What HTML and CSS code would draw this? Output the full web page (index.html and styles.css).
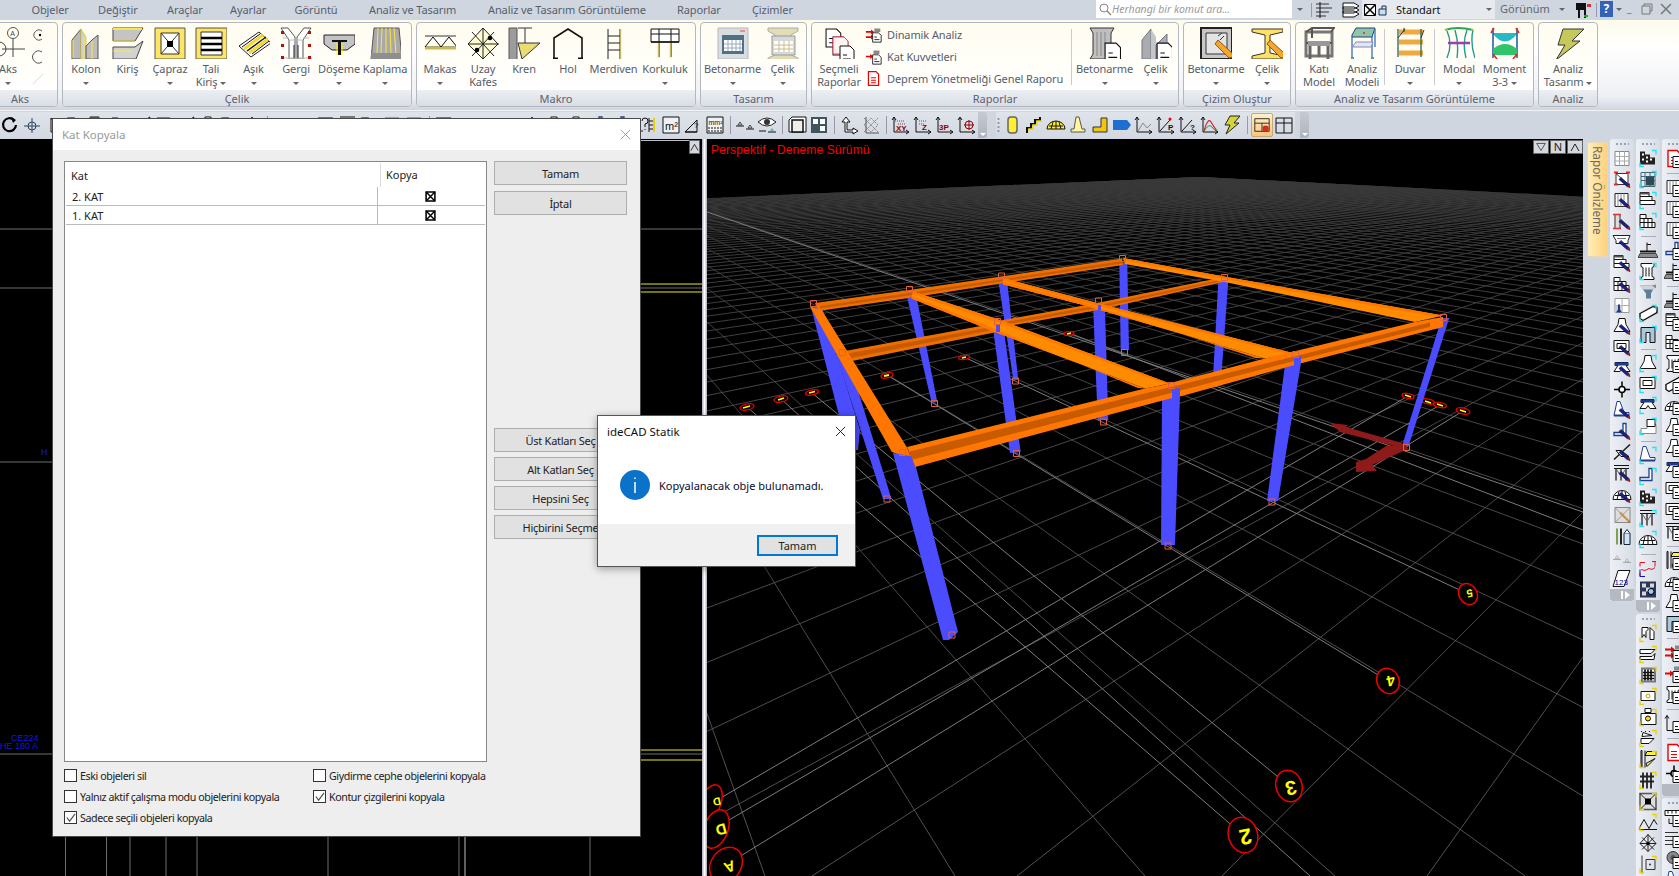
FILE: index.html
```html
<!DOCTYPE html>
<html lang="tr">
<head>
<meta charset="utf-8">
<title>ideCAD Statik</title>
<link rel="stylesheet" href="styles.css">
</head>
<body>
<svg class="defs" aria-hidden="true">
<defs>
<!-- ribbon icons, 32 box -->
<g id="r-kolon"><path d="M2 13 11 2v30H2z" fill="#b9b9b9" stroke="#555"/><path d="M11 2l5 8v22h-5z" fill="#cfcfcf" stroke="#e8d23a"/><path d="M16 19l6-6 6-5v24H16z" fill="#bdbdbd" stroke="#555"/><path d="M3 13v18M14 10v22M22 14v18" stroke="#ffe34d" fill="none"/></g>
<g id="r-kiris"><path d="M1 1h30l-8 13H1z" fill="#c4c4c4" stroke="#444"/><path d="M1 2h29" stroke="#ffe34d" stroke-width="2"/><path d="M1 20h22l8-6-7 18H1z" fill="#d2d2d2" stroke="#444"/><path d="M1 14h22M1 24h20" stroke="#ffe34d"/></g>
<g id="r-capraz"><path d="M1 1h30v31H1z" fill="#ffe566" stroke="#555"/><path d="M7 6h18v21H7z" fill="#fff" stroke="#333"/><path d="M7 6l18 21M25 6 7 27" stroke="#333"/><path d="M13 14h6v6h-6z" fill="#000"/></g>
<g id="r-tali"><path d="M1 1h31v31H1z" fill="#ffe566" stroke="#555"/><path d="M6 5h21v23H6z" fill="#fff" stroke="#333"/><path d="M6 11h21M6 17h21M6 23h21" stroke="#000" stroke-width="2.4"/></g>
<g id="r-asik"><path d="M1 19 21 5l12 11-20 14z" fill="#fff" stroke="#222"/><path d="M6 22 25 8M11 26l19-14" stroke="#f4d92c" stroke-width="3"/><path d="M9 24 28 10" stroke="#111" stroke-width="1.4"/><path d="M14 27 31 14M4 20 22 7" stroke="#111"/></g>
<g id="r-gergi"><path d="M1 1h7l7 9v22H9V13zM31 1h-7l-7 9v22h6V13z" fill="#fff" stroke="#555"/><path d="M3 11h6M23 11h6M1 31h31M10 13h12" stroke="#bbb"/><path d="M1 4h3v3H1zM28 4h3v3h-3zM1 17h3v3H1zM28 17h3v3h-3zM1 29h3v3H1zM28 29h3v3h-3z" fill="#a11"/><path d="M14 18v13M18 18v13" stroke="#222"/></g>
<g id="r-doseme"><path d="M1 8h31v9l-8 6H9l-8-6z" fill="#c4c4c4" stroke="#222"/><path d="M9 13h15v2h-6v13h-3V15H9z" fill="#111"/><path d="M14 16v12M19 16v12" stroke="#fff200"/></g>
<g id="r-kaplama"><path d="M5 1h25l3 31H2z" fill="#a9a9a9" stroke="#555"/><path d="M9 1 8 26M13 1l-1 25M17 1v25M21 1l1 25M25 1l2 25" stroke="#ffe34d" fill="none"/><path d="M2 26h31v6H2z" fill="#8f8f8f"/></g>
<g id="r-makas"><path d="M1 9h32M1 20h32" stroke="#333"/><path d="M1 21h32" stroke="#c5b955" stroke-width="3"/><path d="M1 20 9 10l8 10 8-10 8 10" fill="none" stroke="#111"/></g>
<g id="r-uzay"><path d="M16 1l15 16-15 15L1 17z" fill="#fffbd2" stroke="#222"/><path d="M1 17h31M16 1v31M5 5l22 24M27 5 5 29" stroke="#222"/><circle cx="23" cy="11" r="2.3" fill="#000"/><circle cx="10" cy="23" r="2.3" fill="#000"/></g>
<g id="r-kren"><path d="M1 1h8v32H1z" fill="#9c9c9c" stroke="#555"/><path d="M10 1h14M17 1v15M10 16h22L14 32z" fill="#e9dc74" stroke="#333"/></g>
<g id="r-hol"><path d="M2 31V11L16 2l14 9v20" fill="none" stroke="#111" stroke-width="1.6"/><path d="M1 32h5M26 32h5" stroke="#111" stroke-width="3"/></g>
<g id="r-merdiven"><path d="M10 2v30M22 2v30" stroke="#222"/><path d="M23 2v30" stroke="#ffe34d"/><path d="M10 9h12M10 16h12M10 23h12" stroke="#222"/></g>
<g id="r-korkuluk"><path d="M2 2h28v13H2z" fill="#fff" stroke="#111"/><path d="M2 7h28M10 2v28M22 2v28" stroke="#111"/><path d="M9 15v16M21 15v16" stroke="#ffe34d"/><path d="M2 15h28" stroke="#111" stroke-width="1.5"/></g>
<g id="r-tbeton"><path d="M1 1h30v31H1z" fill="#d9dde0" stroke="#b5b9bd"/><path d="M5 8h22v19H5z" fill="#4d7187"/><path d="M7 13h18v11H7z" fill="#fff"/><path d="M7 17h18M7 21h18M11 13v11M15 13v11M19 13v11M23 13v11" stroke="#9ab"/><path d="M23 4h5" stroke="#e44"/></g>
<g id="r-tcelik"><path d="M1 1h30v3l-7 4v20l7 3v2H1v-2l7-3V8L1 4z" fill="#e2dcb5" stroke="#aaa"/><path d="M5 9h23v19H5z" fill="#d8d8d8" stroke="#999"/><path d="M7 14h19v11H7z" fill="#fff"/><path d="M7 18h19M7 22h19M12 14v11M17 14v11M22 14v11" stroke="#cb8"/></g>
<g id="doc"><path d="M1 1h10l4 4v13H1z" fill="#fff" stroke="#111"/><path d="M4 10h4M4 14h8" stroke="#111"/></g>
<g id="r-secmeli"><use href="#doc" transform="translate(2 1) scale(1.05)"/><use href="#doc" transform="translate(9 9) scale(1.05)" stroke="#e33"/><path d="M10 10h11l4 4v13H10z" fill="#fff3f3" stroke="#f35"/><use href="#doc" transform="translate(16 18) scale(1)"/></g>
<g id="r-col-doc"><path d="M1 1h24l-3 5v21l3 5H1l3-5V6z" fill="#bfbfbf" stroke="#333"/><path d="M8 5v24M12 5v24M16 5v24" stroke="#888"/><use href="#doc" transform="translate(15 15) scale(1.1)"/></g>
<g id="r-kol-doc"><path d="M2 13 11 2v30H2z" fill="#a9adb3" stroke="#777"/><path d="M11 2l5 8v22h-5z" fill="#c3c7cc"/><path d="M16 18 27 7v25H16z" fill="#a9adb3" stroke="#777"/><use href="#doc" transform="translate(16 15) scale(1.1)"/></g>
<g id="r-cb"><path d="M1 1h31v31H1z" fill="#c8c8c8" stroke="#222" stroke-width="2"/><path d="M6 6h21v21H6z" fill="#e4e4e4" stroke="#333"/><path d="M24 9l-4 4M22 6l-4 3" stroke="#333"/><path d="M15 17l14 14 4-1-1-4-14-13z" fill="#f5a62b" stroke="#8a5a10"/></g>
<g id="r-cc"><path d="M1 2h31v3L19 8v18l14 3v3H1v-3l13-3V8L1 5z" fill="#ffe066" stroke="#333"/><path d="M16 17l14 14 4-1-1-4-14-13z" fill="#f5a62b" stroke="#8a5a10"/></g>
<g id="r-kati"><path d="M3 5h26v24H3z" fill="none" stroke="#777" stroke-width="3"/><path d="M3 5 9 1h22l-3 4M3 16h26M9 1v10" stroke="#555" fill="none" stroke-width="2"/><path d="M5 14h22v5H5z" fill="#999"/><path d="M7 19v13M25 19v13M16 19v11" stroke="#666" stroke-width="3"/></g>
<g id="r-am"><path d="M6 8 10 1h19l-3 9H6z" fill="#8fc5a8" stroke="#247"/><path d="M6 9v22M26 9v22M29 2v18" stroke="#3a6cc2" stroke-width="1.3"/><path d="M7 19l3-4h17l-2 5H7z" fill="#dfe7f7" stroke="#88a"/><circle cx="18" cy="6" r="1" fill="#e22"/><path d="M5 31h3M25 31h3" stroke="#5a5" stroke-width="2"/></g>
<g id="r-duvar"><path d="M5 5h24M5 15h24M5 26h24" stroke="#f0a93f" stroke-width="5"/><path d="M4 2v28M27 2v28M10 1v4" stroke="#3d6f52" stroke-width="1.4"/><path d="M4 11l7-9M27 11l3-8" stroke="#335" fill="none"/></g>
<g id="r-modal"><path d="M2 3q12-4 28 0" fill="none" stroke="#2ba35a" stroke-width="2"/><path d="M4 4q6 13 0 27M12 3q4 13 2 28M24 3q-5 13-1 28M30 3q-3 13 2 28" fill="none" stroke="#1d9c8a" stroke-width="1.4"/><path d="M5 16h22" stroke="#9a3fb0" stroke-width="2.4"/><path d="M2 3h3M28 3h3" stroke="#dd3"/></g>
<g id="r-moment"><path d="M4 1v30M28 1v30" stroke="#1d65a8" stroke-width="1.6"/><path d="M4 7h24M4 23h24" stroke="#0d2a5a"/><path d="M4 7q12 15 24 0z" fill="#27b9c2"/><path d="M4 22q12-10 24 0v6H4z" fill="#31c56b"/><path d="M2 6l3-5M30 6l-3-5M4 27l4 5M28 27l-4 5" stroke="#e22" stroke-width="1.6"/></g>
<g id="r-bolt"><path d="M11 2h21L20 14h8L4 33l9-15H6z" fill="#c7c85c" stroke="#333"/></g>
<g id="r-aks"><circle cx="16" cy="6" r="5.500" fill="none" stroke="#555"/><text x="13.200" y="9" class="akst">A</text><path d="M16 12v18M5 22h23" stroke="#444"/><circle cx="2" cy="22" r="7" fill="none" stroke="#444"/></g>
<!-- small toolbar shapes, 20 box -->
<g id="o-pen"><path d="M7 10l8 7 3 1-1-3-8-7z" fill="#1a1f8f" stroke="#111" stroke-width=".6"/><path d="M15 17l3 1-1-3z" fill="#c11"/></g>
<g id="o-cy"><path d="M14 2h4v4M2 14v4h4" fill="none" stroke="#1fe5ee" stroke-width="1.3"/></g>
<g id="o-ye"><path d="M14 2h4v4M2 14v4h4" fill="none" stroke="#e9d00c" stroke-width="1.3"/></g>
<g id="o-doc"><path d="M9 8h7l3 3v8H9z" fill="#fff" stroke="#111"/><path d="M11 13h3M11 16h6" stroke="#111"/></g>
<g id="t-grid"><path d="M3 3h14v14H3z" fill="#fff" stroke="#888"/><path d="M7.500 3v14M12.500 3v14M3 8h14M3 12.500h14" stroke="#aaa"/></g>
<g id="t-node"><path d="M4 4h12v11H4z" fill="#fff" stroke="#333"/><path d="M2 3h4M14 3h4M2 15h4M14 15h4" stroke="#e22" stroke-width="2"/><path d="M4 4l12 11" stroke="#333"/></g>
<g id="t-hatch"><path d="M3 3h13v13H3z" fill="#fff" stroke="#222"/><path d="M6 3v13M9 3v13M12 3v13" stroke="#888"/></g>
<g id="t-colr"><path d="M3 3h5v14H3z" fill="#ddd" stroke="#333"/><path d="M1 3h8M1 17h8" stroke="#d33" stroke-width="1.4"/></g>
<g id="t-ubeam"><path d="M1 3h17l-2 5v3H4V8z" fill="#fff" stroke="#222"/><path d="M5 6h9" stroke="#777"/></g>
<g id="t-stack"><path d="M2 2h9v4H2zM2 6h12v4H2zM2 10h15v4H2z" fill="#fff" stroke="#111"/><path d="M2 2h9v2H2z" fill="#555"/></g>
<g id="t-brick"><path d="M2 3h6v4H2zM2 7h12v4H2zM2 11h15v5H2z" fill="#fff" stroke="#111"/><path d="M6 7v9M10 7v9M14 11v5" stroke="#111"/></g>
<g id="t-winb"><path d="M3 3h14v14H3z" fill="#fff" stroke="#999"/><path d="M10 3v14M3 10h14" stroke="#aaa"/><path d="M3 10h7v7H3z" fill="#ccd"/><path d="M6 9h2v5l2 3H4l2-3z" fill="#1a3e8a"/></g>
<g id="t-found"><path d="M7 2h6l1 6 4 7H2l4-7z" fill="#fff" stroke="#111"/></g>
<g id="t-rect"><path d="M2 3h15v11H2z" fill="#fff" stroke="#111"/><path d="M5 6h9v5H5z" fill="none" stroke="#111"/></g>
<g id="t-found2"><path d="M3 4h13v3h-2l4 6h-6l-2-3-2 3H2l4-6H3z" fill="#fff" stroke="#111"/><path d="M3 4h13v3H3z" fill="#1d3c96"/></g>
<g id="t-plus"><path d="M10 2v16M2 10h16" stroke="#000" stroke-width="1.5"/><circle cx="10" cy="10" r="3" fill="#fff" stroke="#000" stroke-width="1.6"/></g>
<g id="t-tee"><path d="M5 1h3l4 11h5v3H2z" fill="#fff" stroke="#1b3f8f"/><path d="M2 15h15" stroke="#1b3f8f" stroke-width="2"/></g>
<g id="t-ell"><path d="M11 2h3v12H2v-3h9z" fill="#fff" stroke="#1b3f8f" stroke-width="1.3"/></g>
<g id="t-diag"><path d="M2 17 18 2" stroke="#111" stroke-width="1.4"/><path d="M4 8h5l8 6H9z" fill="#fff" stroke="#111"/></g>
<g id="t-truss"><path d="M2 2h15M2 5h15" stroke="#111"/><path d="M4 5v12M9 5v12M14 5v12" stroke="#111" stroke-width="1.2"/><path d="M4 5l5 8 5-8" fill="none" stroke="#666"/></g>
<g id="t-dome"><path d="M1 15a9 9 0 0 1 18 0z" fill="#fff" stroke="#111"/><path d="M5 15l2-8M10 15V6M15 15l-2-8M3 11h14" stroke="#111"/></g>
<g id="t-xgray"><path d="M3 2h15v15H3z" fill="#ddd" stroke="#888"/><path d="M3 2l15 15M18 2 3 17" stroke="#999"/><path d="M8 8l8 8 2 1-1-2-8-8z" fill="#f0a53a" stroke="#85520d" stroke-width=".5"/></g>
<g id="t-bars"><path d="M4 2h2v16H4z" fill="#7aa24f"/><path d="M8 2h2v16H8z" fill="#222"/><path d="M12 7h6v11h-6z" fill="#cfe6f7" stroke="#123"/><path d="M12 7l3-4 3 4" fill="#fff" stroke="#123"/></g>
<g id="t-lvl"><path d="M1 12h8M11 15h8" stroke="#aaa"/><path d="M3 11l2-3 2 3zM13 14l2-3 2 3z" fill="none" stroke="#bbb"/></g>
<g id="t-123"><path d="M6 2h12l-6 16H1z" fill="#fff" stroke="#111"/><text x="2.500" y="16" class="num">123</text></g>
<g id="t-check"><path d="M2 3h5v3h5v3h5v7H2z" fill="#222"/><path d="M4 5h2v2H4zM8 8h2v2H8zM4 10h2v2H4zM8 12h2v2H8zM12 10h2v2h-2z" fill="#fff"/></g>
<g id="t-calc"><path d="M3 3h14v14H3z" fill="none" stroke="#3d6a78"/><path d="M3 7h14M3 11h14M7 3v14M12 3v14" stroke="#3d6a78"/><path d="M8 7h8v9H8z" fill="#304a55"/></g>
<g id="t-beamf"><path d="M2 13h16l2 4H0z" fill="#8c8c8c" stroke="#444"/><path d="M2 11h16" stroke="#111" stroke-width="2"/><path d="M9 2v9M9 4h4" stroke="#111"/></g>
<g id="t-cap"><path d="M3 2h13v3l-2 1v9l2 1v2H3v-2l2-1V6L3 5z" fill="#fff" stroke="#111"/><path d="M8 6v9M11 6v9" stroke="#111"/></g>
<g id="t-funnel"><path d="M2 3h15l-4 8v5H8v-5z" fill="#5e7f98"/><path d="M2 3h15l-2 4H4z" fill="#cfd4da"/><path d="M14 3l4-1v4z" fill="#888"/></g>
<g id="t-slab"><path d="M2 10 15 3l4 1v5L5 17 2 15z" fill="#fff" stroke="#111" stroke-width="1.4"/></g>
<g id="t-port"><path d="M3 18V3h14v15h-5V8H8v10z" fill="#a9c8dc" stroke="#111"/></g>
<g id="t-lsm"><path d="M3 12h6v-2l2-2h7v9H3z" fill="#fff" stroke="#888"/><path d="M9 3h8v7H9z" fill="#fff" stroke="#111"/></g>
<g id="t-redline"><path d="M2 8V4h5M2 14v4h5M17 3v5M14 3h4M3 11l4 1 4-2 3 1 3-2" fill="none" stroke="#e11"/><path d="M2 11v7h5" fill="none" stroke="#11c"/></g>
<g id="t-lens"><path d="M2 2h16v16H2z" fill="#335" /><path d="M4 4h4v4H4zM12 4h4v4h-4zM8 8h4v4H8zM4 12h4v4H4z" fill="#cdd"/><circle cx="13" cy="12" r="3" fill="#9cf" stroke="#000"/></g>
<g id="t-m"><path d="M4 4h6v2l-2 2v6l-2-3-2 3zM12 4l4 4v8h-4z" fill="#fff" stroke="#111"/></g>
<g id="t-beamy"><path d="M2 5h15L13 9H2zM2 12h12l3-3-1 6H2z" fill="#fff" stroke="#111"/></g>
<g id="t-mesh"><path d="M3 2h15v15H3z" fill="#777"/><path d="M5 4h11v11H5z" fill="#fff"/><path d="M7 4v11M10 4v11M13 4v11M5 7h11M5 10h11M5 13h11" stroke="#111" stroke-width="1.7"/></g>
<g id="t-oct"><path d="M3 5h14v9H3z" fill="#fff" stroke="#111"/><path d="M8 9.500a2 2 0 1 0 4 0 2 2 0 1 0-4 0" fill="none" stroke="#b8a20a"/></g>
<g id="t-hook"><path d="M7 1h6v4H7zM3 6h15v11H3z" fill="#fff" stroke="#111"/><circle cx="10" cy="11" r="2.500" fill="#ffd90f" stroke="#111"/></g>
<g id="t-lay"><path d="M3 3h1M7 3h1M11 3h1M5 4l9 3-10 1zM3 10h13l-5 5H3z" fill="#fff" stroke="#111"/></g>
<g id="t-wedge"><path d="M3 1h1v17H3zM7 1v17M7 6h11v-4H9zM8 14l9-5-8 8z" fill="#fff23d" stroke="#111"/></g>
<g id="t-bar4"><path d="M5 2v16M9 2v16M13 2v16M2 6h14M2 11h14" stroke="#222" stroke-width="1.800"/></g>
<g id="t-xbox"><path d="M2 2h16v16H2z" fill="#ddd" stroke="#555" stroke-width="1.500"/><path d="M2 2l16 16M18 2 2 18" stroke="#222"/><path d="M7 7h6v6H7z" fill="#000"/></g>
<g id="t-waves"><path d="M1 16 6 7l5 9 5-9 3 5" fill="none" stroke="#111"/><path d="M1 17h18" stroke="#111"/></g>
<g id="t-star"><path d="M10 1l8 9-8 8-8-8z" fill="none" stroke="#222"/><path d="M2 10h16M10 1v17M4 4l12 12M16 4 4 16" stroke="#222"/><circle cx="10" cy="10" r="1.800"/></g>
<g id="t-frame"><path d="M4 1v18M8 5h9v10H8z" fill="none" stroke="#333"/><circle cx="12" cy="10" r="1" fill="#333"/></g>
<g id="t-rdoc"><path d="M4 2h9l3 3v13H4z" fill="#fff" stroke="#e00" stroke-width="1.400"/><path d="M7 9h6M7 12h6M7 15h6" stroke="#e00" stroke-width="1.200"/></g>
<g id="t-arr2"><path d="M1 7h8M1 13h8" stroke="#e00" stroke-width="2"/><path d="M7 4l4 3-4 3zM7 10l4 3-4 3z" fill="#e00"/><path d="M11 3h7v4h-7z" fill="#888"/></g>
<g id="t-arr1"><path d="M1 10h7" stroke="#e00" stroke-width="2"/><path d="M6 7l4 3-4 3z" fill="#e00"/><path d="M10 3h7v4h-7z" fill="#888"/></g>
<g id="t-rule"><path d="M1 3h17v5H1z" fill="#fff" stroke="#111"/><path d="M4 3v3M8 3v3M12 3v3M16 3v3M5 11v5h5" stroke="#111" fill="none"/></g>
<g id="t-lines"><path d="M1 4h13M1 8h16M1 12h13M1 16h10" stroke="#333"/></g>
<g id="t-ring"><circle cx="9" cy="8" r="6" fill="#888" stroke="#333"/><circle cx="9" cy="8" r="2.500" fill="#555"/></g>
<g id="t-axes"><path d="M3 2v15h15" fill="none" stroke="#111"/><path d="M3 2 1 5M3 2l2 3M18 17l-3-2M18 17l-3 2" stroke="#111"/></g>
<g id="t-sepline"><path d="M1 18h18" stroke="#111"/></g>
</defs>
</svg>

<div class="app">
  <header class="menubar">
    <nav class="menu">
      <span class="mi">Objeler</span><span class="mi">Değiştir</span><span class="mi">Araçlar</span><span class="mi">Ayarlar</span><span class="mi">Görüntü</span><span class="mi">Analiz ve Tasarım</span><span class="mi">Analiz ve Tasarım Görüntüleme</span><span class="mi">Raporlar</span><span class="mi">Çizimler</span>
    </nav>
    <div class="topright">
      <div class="search">
        <svg class="ico14" viewBox="0 0 14 14"><circle cx="6" cy="6" r="4" fill="none" stroke="#888"/><path d="M9 9l4 4" stroke="#888" stroke-width="1.400"/></svg>
        <span>Herhangi bir komut ara...</span>
      </div>
      <span class="drop wdrop"><i class="caret"></i></span>
      <span class="vsep"></span>
      <svg class="tico" viewBox="0 0 20 20"><use href="#t-lines"/><path d="M5 2v16" stroke="#111"/></svg>
      <svg class="tico gap6" viewBox="0 0 20 20"><path d="M2 3h11l5 3-5 3H2zM2 7h11l5 3-5 3H2zM2 11h11l5 3-5 3H2z" fill="#fff" stroke="#111"/></svg>
      <div class="std">
        <svg class="ico12" viewBox="0 0 12 12"><path d="M.5.500h11v11H.5z" fill="#fff" stroke="#000"/><path d="M1 1l10 10M11 1 1 11" stroke="#000" stroke-width="1.500"/></svg>
        <svg class="ico12" viewBox="0 0 12 12"><path d="M1 5h7v6H1z" fill="#cde" stroke="#135"/><path d="M4 5V2h4v3" fill="none" stroke="#135"/></svg>
        <span class="stdlabel">Standart</span>
        <i class="caret"></i>
      </div>
      <span class="gor">Görünüm</span><i class="caret"></i>
      <svg class="tico" viewBox="0 0 20 20"><path d="M3 3h10v7H3z" fill="#111"/><path d="M6 10v8M12 10v8" stroke="#111" stroke-width="2"/><path d="M14 4h4v3h-4z" fill="#c33"/><path d="M11 16h4" stroke="#2a2" stroke-width="2"/></svg>
      <span class="vsep"></span>
      <span class="help">?</span>
      <i class="caret"></i>
      <span class="wbtn">_</span>
      <svg class="ico12" viewBox="0 0 12 12"><path d="M1 3h8v8H1z" fill="none" stroke="#777"/><path d="M3 3V1h8v7H9" fill="none" stroke="#777"/></svg>
      <svg class="ico12" viewBox="0 0 12 12"><path d="M1 1l10 10M11 1 1 11" stroke="#777" stroke-width="1.500"/></svg>
    </div>
  </header>

  <section class="ribbon">
    <div class="grp g-aks">
      <div class="gbody">
        <div class="rb"><svg class="rico" viewBox="0 0 32 32"><use href="#r-aks"/></svg><span class="rl">Aks</span><i class="caret low"></i></div>
        <div class="aksside">
          <svg class="ico14" viewBox="0 0 14 14"><path d="M11 3a5 5 0 1 0 0 8" fill="none" stroke="#555"/><circle cx="9" cy="7" r="1.200"/></svg>
          <svg class="ico14" viewBox="0 0 14 14"><path d="M11 2a6 6 0 1 0 0 10" fill="none" stroke="#555"/></svg>
          <svg class="ico14" viewBox="0 0 14 14"><path d="M2 12l10-10" stroke="#ccc" stroke-dasharray="2 1"/></svg>
        </div>
      </div>
      <div class="gcap">Aks</div>
    </div>

    <div class="grp g-celik">
      <div class="gbody">
        <div class="rb"><svg class="rico" viewBox="0 0 32 32"><use href="#r-kolon"/></svg><span class="rl">Kolon</span><i class="caret low"></i></div>
        <div class="rb"><svg class="rico" viewBox="0 0 32 32"><use href="#r-kiris"/></svg><span class="rl">Kiriş</span></div>
        <div class="rb"><svg class="rico" viewBox="0 0 32 32"><use href="#r-capraz"/></svg><span class="rl">Çapraz</span><i class="caret low"></i></div>
        <div class="rb"><svg class="rico" viewBox="0 0 32 32"><use href="#r-tali"/></svg><span class="rl">Tali</span><span class="rl">Kiriş <i class="caret"></i></span></div>
        <div class="rb"><svg class="rico" viewBox="0 0 32 32"><use href="#r-asik"/></svg><span class="rl">Aşık</span><i class="caret low"></i></div>
        <div class="rb"><svg class="rico" viewBox="0 0 32 32"><use href="#r-gergi"/></svg><span class="rl">Gergi</span><i class="caret low"></i></div>
        <div class="rb"><svg class="rico" viewBox="0 0 32 32"><use href="#r-doseme"/></svg><span class="rl">Döşeme</span><i class="caret low"></i></div>
        <div class="rb"><svg class="rico" viewBox="0 0 32 32"><use href="#r-kaplama"/></svg><span class="rl">Kaplama</span><i class="caret low"></i></div>
      </div>
      <div class="gcap">Çelik</div>
    </div>

    <div class="grp g-makro">
      <div class="gbody">
        <div class="rb"><svg class="rico" viewBox="0 0 32 32"><use href="#r-makas"/></svg><span class="rl">Makas</span><i class="caret low"></i></div>
        <div class="rb"><svg class="rico" viewBox="0 0 32 32"><use href="#r-uzay"/></svg><span class="rl">Uzay</span><span class="rl">Kafes</span></div>
        <div class="rb"><svg class="rico" viewBox="0 0 32 32"><use href="#r-kren"/></svg><span class="rl">Kren</span></div>
        <div class="rb"><svg class="rico" viewBox="0 0 32 32"><use href="#r-hol"/></svg><span class="rl">Hol</span></div>
        <div class="rb"><svg class="rico" viewBox="0 0 32 32"><use href="#r-merdiven"/></svg><span class="rl">Merdiven</span></div>
        <div class="rb"><svg class="rico" viewBox="0 0 32 32"><use href="#r-korkuluk"/></svg><span class="rl">Korkuluk</span><i class="caret low"></i></div>
      </div>
      <div class="gcap">Makro</div>
    </div>

    <div class="grp g-tasarim">
      <div class="gbody">
        <div class="rb"><svg class="rico" viewBox="0 0 32 32"><use href="#r-tbeton"/></svg><span class="rl">Betonarme</span><i class="caret low"></i></div>
        <div class="rb"><svg class="rico" viewBox="0 0 32 32"><use href="#r-tcelik"/></svg><span class="rl">Çelik</span><i class="caret low"></i></div>
      </div>
      <div class="gcap">Tasarım</div>
    </div>

    <div class="grp g-rapor">
      <div class="gbody">
        <div class="rb"><svg class="rico" viewBox="0 0 32 32"><use href="#r-secmeli"/></svg><span class="rl">Seçmeli</span><span class="rl">Raporlar</span></div>
        <div class="rlist">
          <div class="rli"><svg class="ico16" viewBox="0 0 20 20"><use href="#t-arr2"/><use href="#o-doc"/></svg><span>Dinamik Analiz</span></div>
          <div class="rli"><svg class="ico16" viewBox="0 0 20 20"><use href="#t-arr1"/><use href="#o-doc"/></svg><span>Kat Kuvvetleri</span></div>
          <div class="rli"><svg class="ico16" viewBox="0 0 20 20"><use href="#t-rdoc"/></svg><span>Deprem Yönetmeliği Genel Raporu</span></div>
        </div>
        <span class="rsep"></span>
        <div class="rb"><svg class="rico" viewBox="0 0 32 32"><use href="#r-col-doc"/></svg><span class="rl">Betonarme</span><i class="caret low"></i></div>
        <div class="rb"><svg class="rico" viewBox="0 0 32 32"><use href="#r-kol-doc"/></svg><span class="rl">Çelik</span><i class="caret low"></i></div>
      </div>
      <div class="gcap">Raporlar</div>
    </div>

    <div class="grp g-cizim">
      <div class="gbody">
        <div class="rb"><svg class="rico" viewBox="0 0 32 32"><use href="#r-cb"/></svg><span class="rl">Betonarme</span><i class="caret low"></i></div>
        <div class="rb"><svg class="rico" viewBox="0 0 32 32"><use href="#r-cc"/></svg><span class="rl">Çelik</span><i class="caret low"></i></div>
      </div>
      <div class="gcap">Çizim Oluştur</div>
    </div>

    <div class="grp g-atg">
      <div class="gbody">
        <div class="rb"><svg class="rico" viewBox="0 0 32 32"><use href="#r-kati"/></svg><span class="rl">Katı</span><span class="rl">Model</span></div>
        <div class="rb"><svg class="rico" viewBox="0 0 32 32"><use href="#r-am"/></svg><span class="rl">Analiz</span><span class="rl">Modeli</span></div>
        <span class="rsep"></span>
        <div class="rb"><svg class="rico" viewBox="0 0 32 32"><use href="#r-duvar"/></svg><span class="rl">Duvar</span><i class="caret low"></i></div>
        <span class="rsep"></span>
        <div class="rb"><svg class="rico" viewBox="0 0 32 32"><use href="#r-modal"/></svg><span class="rl">Modal</span><i class="caret low"></i></div>
        <div class="rb"><svg class="rico" viewBox="0 0 32 32"><use href="#r-moment"/></svg><span class="rl">Moment</span><span class="rl">3-3 <i class="caret"></i></span></div>
      </div>
      <div class="gcap">Analiz ve Tasarım Görüntüleme</div>
    </div>

    <div class="grp g-analiz">
      <div class="gbody">
        <div class="rb"><svg class="rico" viewBox="0 0 32 32"><use href="#r-bolt"/></svg><span class="rl">Analiz</span><span class="rl">Tasarım <i class="caret"></i></span></div>
      </div>
      <div class="gcap">Analiz</div>
    </div>
  </section>

  <section class="toolrow">
    <div class="tb tb1">
      <svg class="cell" viewBox="0 0 20 20"><path d="M14 5a6.500 6.500 0 1 0 2 5" fill="none" stroke="#000" stroke-width="2.200"/><path d="M11 2l5 3-3 3z" fill="#000"/></svg>
      <svg class="cell" viewBox="0 0 20 20"><circle cx="10" cy="11" r="4" fill="none" stroke="#346"/><path d="M10 3v15M2 11h16" stroke="#346"/></svg>
      <svg class="cell" viewBox="0 0 20 20"><path d="M7 3v14h10z" fill="none" stroke="#111"/></svg>
      <svg class="cell" viewBox="0 0 20 20"><use href="#t-colr"/></svg>
      <svg class="cell" viewBox="0 0 20 20"><use href="#t-stack"/></svg>
      <svg class="cell" viewBox="0 0 20 20"><use href="#t-brick"/></svg>
      <svg class="cell" viewBox="0 0 20 20"><use href="#t-diag"/></svg>
      <svg class="cell" viewBox="0 0 20 20"><use href="#t-hatch"/></svg>
      <svg class="cell" viewBox="0 0 20 20"><use href="#t-diag"/></svg>
      <svg class="cell" viewBox="0 0 20 20"><use href="#t-found"/></svg>
      <svg class="cell" viewBox="0 0 20 20"><use href="#t-colr"/></svg>
      <svg class="cell" viewBox="0 0 20 20"><use href="#t-plus"/></svg>
      <span class="tsep"></span>
      <svg class="cell" viewBox="0 0 20 20"><use href="#t-lines"/></svg>
      <svg class="cell" viewBox="0 0 20 20"><use href="#t-lines"/></svg>
      <svg class="cell" viewBox="0 0 20 20"><use href="#t-rect"/></svg>
      <svg class="cell" viewBox="0 0 20 20"><use href="#t-truss"/></svg>
      <svg class="cell" viewBox="0 0 20 20"><use href="#t-colr"/></svg>
      <svg class="cell" viewBox="0 0 20 20"><use href="#t-calc"/></svg>
      <svg class="cell" viewBox="0 0 20 20"><use href="#t-calc"/></svg>
      <span class="tsep"></span>
      <svg class="cell" viewBox="0 0 20 20"><use href="#t-rect"/></svg>
      <svg class="cell" viewBox="0 0 20 20"><use href="#t-lvl"/></svg>
      <svg class="cell" viewBox="0 0 20 20"><use href="#t-lvl"/></svg>
      <svg class="cell" viewBox="0 0 20 20"><use href="#t-dome"/></svg>
      <svg class="cell" viewBox="0 0 20 20"><use href="#t-plus"/></svg>
      <svg class="cell" viewBox="0 0 20 20"><use href="#t-found"/></svg>
      <svg class="cell" viewBox="0 0 20 20"><use href="#t-found"/></svg>
      <svg class="cell" viewBox="0 0 20 20"><use href="#t-ell"/></svg>
      <svg class="cell" viewBox="0 0 20 20"><use href="#t-ell"/></svg>
      <span class="tgap"></span>
      <svg class="cell" viewBox="0 0 20 20"><path d="M1 16h3M3 6a3 3 0 1 1 3 3v3M6 14v1" fill="none" stroke="#111"/><path d="M10 3v14M15 3v14M10 6h5M10 10h5M10 14h5" stroke="#111"/><path d="M15 3v14" stroke="#e8d20c" stroke-width="2"/></svg>
      <svg class="cell" viewBox="0 0 20 20"><path d="M2 2h16v16H2z" fill="#eef1f5" stroke="#111"/><text x="4" y="15" class="mm">m²</text></svg>
      <svg class="cell" viewBox="0 0 20 20"><path d="M2 17 14 5v12zM2 17h12" fill="none" stroke="#111"/><text x="11" y="13" class="qm">?</text></svg>
      <svg class="cell" viewBox="0 0 20 20"><path d="M2 2h16v16H2z" fill="#eef1f5" stroke="#111"/><text x="3.500" y="10" class="mm2">mm²</text><path d="M3 13h14M3 16h14" stroke="#111" stroke-dasharray="2 1"/></svg>
      <span class="tsep"></span>
      <svg class="cell" viewBox="0 0 20 20"><path d="M1 11h8M11 14h8" stroke="#111"/><path d="M3 10l2-3 2 3zM13 13l2-3 2 3z" fill="none" stroke="#444"/></svg>
      <svg class="cell" viewBox="0 0 20 20"><path d="M1 7q9-8 18 0-9 8-18 0z" fill="#fff" stroke="#222"/><circle cx="10" cy="7" r="3" fill="#333"/><path d="M2 16h7M11 17h8" stroke="#111"/><path d="M13 16l2-3 2 3z" fill="#6ab"/></svg>
      <span class="tsep"></span>
      <svg class="cell" viewBox="0 0 20 20"><path d="M2 5l3-3h14v15H2z" fill="#fff" stroke="#111"/><path d="M5 5h11v12H5z" fill="#eee" stroke="#111" stroke-width="1.500"/></svg>
      <svg class="cell" viewBox="0 0 20 20"><path d="M2 2h16v16H2z" fill="#3f5560"/><path d="M4 4h5v5H4zM11 4h5v5h-5zM11 11h5v5h-5z" fill="#fff"/></svg>
      <span class="tsep"></span>
      <svg class="cell" viewBox="0 0 20 20"><path d="M6 17V7H3l4-5 4 5H8v8h6v-2l5 3-5 3v-2z" fill="#fff" stroke="#111"/></svg>
      <svg class="cell" viewBox="0 0 20 20"><path d="M3 3l14 14M17 3 3 17M3 10l7-7 7 7-7 7z" fill="none" stroke="#888" stroke-dasharray="2 1"/><path d="M5 2v16h13" fill="none" stroke="#555"/></svg>
      <span class="tsep"></span>
      <svg class="cell" viewBox="0 0 20 20"><use href="#t-axes"/><path d="M4 6h10M7 9h7" stroke="#555" stroke-dasharray="1 1"/><text x="5" y="16" class="axt">XY</text></svg>
      <svg class="cell" viewBox="0 0 20 20"><use href="#t-axes"/><path d="M6 6h7M6 9h5" stroke="#555" stroke-dasharray="1 1"/><text x="9" y="15" class="axt">Z</text></svg>
      <svg class="cell" viewBox="0 0 20 20"><use href="#t-axes"/><text x="4" y="15" class="axt">3P</text></svg>
      <svg class="cell" viewBox="0 0 20 20"><use href="#t-axes"/><circle cx="12" cy="10" r="4" fill="none" stroke="#900"/><path d="M12 5v10M7 10h10" stroke="#900"/></svg>
    </div>
    <span class="grip"><i class="caret"></i></span>
    <div class="tb tb2">
      <span class="dotsv"></span>
      <svg class="cell" viewBox="0 0 20 20"><rect x="6" y="2" width="9" height="16" rx="3" fill="#ffef2e" stroke="#666" stroke-width="1.500"/></svg>
      <svg class="cell" viewBox="0 0 20 20"><path d="M3 18v-5h4V9h4V5h5V2" fill="none" stroke="#111" stroke-width="2"/><path d="M5 16v-2h4v-4h4V6h5" fill="none" stroke="#f3d40f" stroke-width="1.500"/></svg>
      <svg class="cell" viewBox="0 0 20 20"><path d="M1 14a9 8 0 0 1 18 0z" fill="#ffef2e" stroke="#111"/><path d="M5 14l2-7M10 14V6M15 14l-2-7M3 11h14" stroke="#111"/></svg>
      <svg class="cell" viewBox="0 0 20 20"><path d="M8 2h3l3 12h3v3H3v-3h3z" fill="#fff7a0" stroke="#555"/></svg>
      <svg class="cell" viewBox="0 0 20 20"><path d="M11 3h6v14H3v-5h8z" fill="#f2c511" stroke="#333"/></svg>
      <svg class="cell" viewBox="0 0 20 20"><path d="M1 5h14l4 5-4 5H1z" fill="#1d6fd0"/></svg>
      <svg class="cell" viewBox="0 0 20 20"><use href="#t-axes"/><path d="M4 16 9 8l4 5 4-4" fill="none" stroke="#888"/></svg>
      <svg class="cell" viewBox="0 0 20 20"><use href="#t-axes"/><path d="M4 16 14 5" stroke="#111"/><circle cx="14" cy="4" r="1.500" fill="#e00"/><text x="12" y="15" class="axt2">P</text></svg>
      <svg class="cell" viewBox="0 0 20 20"><use href="#t-axes"/><path d="M4 16 14 5" stroke="#111"/><text x="12" y="15" class="axt2">?</text></svg>
      <svg class="cell" viewBox="0 0 20 20"><use href="#t-axes"/><path d="M4 16q4-14 7-9t6 9" fill="none" stroke="#c22" stroke-width="1.200"/><path d="M4 16q5-8 8-4t5 4" fill="none" stroke="#2a8a4a"/></svg>
      <svg class="cell" viewBox="0 0 20 20"><path d="M8 1h10l-6 7h5L4 19l4-9H3z" fill="#d5d43a" stroke="#222"/></svg>
      <span class="tsep"></span>
      <span class="cell hl"><svg class="ico18" viewBox="0 0 20 20"><path d="M2 3h16v14H2zM2 8h16M10 8v9" fill="none" stroke="#222"/><circle cx="14" cy="14" r="3.500" fill="#d62b1f"/></svg></span>
      <svg class="cell" viewBox="0 0 20 20"><path d="M2 3h16v15H2zM2 8h16M10 3v15" fill="none" stroke="#111"/></svg>
    </div>
    <span class="grip g2"><i class="caret"></i></span>
  </section>

  <main class="work">
    <div class="leftview">
      <svg class="canvas" viewBox="0 139 702 737">
        <path class="wl" d="M0 229h702M0 288h702M0 462h702M0 754h702"/>
        <path class="yl" d="M640 284h62M640 292h62M640 750h62M640 760h62"/>
        <path class="wl" d="M65.500 836v40M106.500 836v40M130 836v40M166 836v40M197 836v40M328 836v40M459 836v40M590 836v40"/>
        <path class="wb" d="M465 836v40M640 140.500h50"/>
        <text x="11" y="741" class="cadtxt">CE224</text>
        <text x="0" y="749" class="cadtxt">HE 180 A</text>
        <text x="41" y="455" class="cadtxt">H</text>
      </svg>
      <span class="updown"><svg viewBox="0 0 10 10" class="ico10"><path d="M1 9 5 2l4 7" fill="none" stroke="#222"/></svg></span>
    </div>
    <div class="divider"></div>
    <div class="view3d">
      <svg class="canvas" viewBox="707 139 876 737">
        <defs>
          <clipPath id="floorclip"><polygon points="1200,177 700,198.500 700,876 1590,876 1590,197"/></clipPath>
          <linearGradient id="floorgrad" gradientUnits="userSpaceOnUse" x1="0" y1="177" x2="0" y2="876">
            <stop offset="0" stop-color="#383838"/><stop offset=".3" stop-color="#4c4c4c"/><stop offset="1" stop-color="#5c5c5c"/>
          </linearGradient>
        </defs>
        <g id="floor" clip-path="url(#floorclip)"></g>
        <!-- main axes -->
        <path class="axis" d="M747 407 1243 835M781 399 1310 876M812 393 1289 786M887 375 1388 681M964 357 1468 594M1069 333 1583 530M1463 411 726 865M1440 405 717 827M1408 396 712 803M707 212 1583 512"/>
        <!-- far bubbles -->
        <g class="bub-s">
          <ellipse cx="747" cy="407" rx="7" ry="3" transform="rotate(-12 747 407)"/><ellipse cx="781" cy="399" rx="7" ry="3" transform="rotate(-12 781 399)"/><ellipse cx="812" cy="392.500" rx="6.500" ry="2.500" transform="rotate(-10 812 392.500)"/><ellipse cx="887" cy="375.500" rx="6" ry="2.500" transform="rotate(-10 887 375.500)"/><ellipse cx="964" cy="357.500" rx="5.500" ry="2" transform="rotate(-8 964 357.500)"/><ellipse cx="1069" cy="333.500" rx="5" ry="1.800" transform="rotate(-5 1069 333.500)"/>
          <ellipse cx="1408" cy="396" rx="6" ry="2.500" transform="rotate(10 1408 396)"/><ellipse cx="1428" cy="401.500" rx="6" ry="2.500" transform="rotate(10 1428 401.500)"/><ellipse cx="1440" cy="405" rx="6.500" ry="2.500" transform="rotate(10 1440 405)"/><ellipse cx="1463" cy="411" rx="7" ry="3" transform="rotate(12 1463 411)"/>
        </g>
        <path class="bub-y" d="M743 408l7-2M778 400l6-2M809 393l6-1.500M884 376l5-1M962 358l4-1M1067 334l4-1M1405 395l6 2M1425 401l6 2M1437 404l6 2M1460 410l6 2"/>
        <!-- columns -->
        <g class="cols">
          <polygon points="811,307 822,307 860,430 858,450 848,450"/>
          <polygon points="836,354 848,358 891.500,499 883,499"/>
          <polygon points="907.300,298 916.700,298 937.300,402 931.700,403"/>
          <polygon points="998.700,283 1007.300,283 1018.300,380 1013.300,380"/>
          <polygon points="1119.300,263 1127.300,263 1129,350 1120.700,350"/>
          <polygon points="1218.300,281 1228.300,281 1221.700,372 1213.300,372"/>
          <polygon points="1441.700,318 1449.300,318 1408.300,447 1401.700,447"/>
          <polygon points="1285,365 1301,363 1278,501 1267,501"/>
          <polygon points="1162,398 1180,396 1175,545 1161,545"/>
          <polygon points="1093.300,310 1105,310 1108.300,420 1097.700,420"/>
          <polygon points="993.300,331 1004,331 1020.700,452 1010,453"/>
          <polygon points="893,453 915,463 958,632 949,640 943,640"/>
        </g>
        <!-- ucs arrows -->
        <polygon class="ucs" points="1406,449 1340,432 1330,423 1348,425 1346,427 1402,443"/>
        <polygon class="ucs" points="1406,445 1386,446 1366,459 1356,462 1356,472 1377,471 1372,465 1408,449"/>
        <!-- beams -->
        <polygon class="bm-e" points="845,351 997,323 1003,320 1097,303 1224,277 1223,282 1098,310 1003,327 997,332 852,361"/>
        <polygon class="bm-d" points="848,353.500 997,326 1003,322.500 1097,305.500 1222,279.500 1222,281 1098,308 1003,325 997,329 851,358"/>
        <polygon class="bm-e" points="815,303 909,290 1001,276.500 1122,258.500 1123,265 1001,283.500 909,298 818,311"/>
        <polygon class="bm-d" points="820,306 909,293 1001,279.500 1122,261 1122,263.500 1001,281.500 909,295.500 820,308.500"/>
        <polygon class="bm-b" points="913,291.500 1000,320 1170,383.500 1145,388.500 995,332 911.500,298.500"/>
        <polygon class="bm" points="913,291.500 1000,320 1170,383.500 1166,384 1000,323 912,294"/>
        <polygon class="bm" points="911.500,298.500 995,332 1145,388.500 1138,388 995,329 911.500,296"/>
        <polygon class="bm-b" points="1003,278 1097,303 1293,353 1265,358.500 1083,305 1003,284.500"/>
        <polygon class="bm" points="1003,278 1097,303 1293,353 1288,354 1097,305.500 1003,280.500"/>
        <polygon class="bm" points="1003,284.500 1083,305 1265,358.500 1256,358 1083,302.500 1003,282"/>
        <polygon class="bm-b" points="1123,258 1224,276.500 1443,315.500 1415,322 1225,282 1125,264"/>
        <polygon class="bm" points="1123,258 1224,276.500 1443,315.500 1436,317 1224,279 1124,260.500"/>
        <polygon class="bm" points="907,447 1147,388 1163,385 1267,358 1415,322 1443,317 1443,327 1300,363.500 1180,396.500 1170,398.500 915,467"/>
        <polygon class="bm-d" points="910,451.500 1170,387.200 1300,355 1430,322.600 1430,326.800 1300,359.500 1170,393.200 910,460.300"/>
        <polygon class="bm" points="810,306.700 821.700,310 906.700,447 912,460 891.700,451.700"/>
        <g class="cols">
          <polygon points="1172,389 1180,388 1180,397 1172,399"/>
          <polygon points="1294,358 1301,356 1301,364 1294,366"/>
          <polygon points="893,453 911,456 915,466 900,470"/>
          <polygon points="996,325 1000,324 1000,332 996,332"/>
          <polygon points="1098,305 1101,305 1101,310 1098,310"/>
        </g>
        <!-- node markers -->
        <path class="nodes" d="M810.500 300.500h6v6h-6zM906.500 286.500h6v6h-6zM998.500 273h6v6h-6zM1119.500 255.500h6v6h-6zM1221.500 274.500h6v6h-6zM1440.500 314.500h6v6h-6zM1292.500 351.500h6v6h-6zM1168.500 382.500h6v6h-6zM899.500 449.500h6v6h-6zM839.500 349.500h6v6h-6zM994.500 318.500h6v6h-6zM1095.500 298h6v6h-6zM884 496h6v6h-6zM931.500 400.500h6v6h-6zM1012.500 378h6v6h-6zM1121.500 349.500h6v6h-6zM1403.500 444.500h6v6h-6zM1269 499h6v6h-6zM1165 543h6v6h-6zM949 632h6v6h-6zM1100.500 419h6v6h-6zM1013.500 450.500h6v6h-6z"/>
        <!-- near bubbles -->
        <g class="bub">
          <ellipse cx="1243" cy="835" rx="14.500" ry="18" transform="rotate(-18 1243 835)"/>
          <ellipse cx="1289" cy="786" rx="13" ry="16" transform="rotate(-18 1289 786)"/>
          <ellipse cx="1388" cy="681" rx="11" ry="13" transform="rotate(-25 1388 681)"/>
          <ellipse cx="1468" cy="594" rx="9" ry="11" transform="rotate(-30 1468 594)"/>
          <ellipse cx="711" cy="802" rx="10" ry="18" transform="rotate(20 711 802)"/>
          <ellipse cx="716" cy="829" rx="12" ry="20" transform="rotate(20 716 829)"/>
          <ellipse cx="726" cy="865" rx="15" ry="19" transform="rotate(35 726 865)"/>
        </g>
        <text class="btx b20" transform="translate(1250 828) rotate(168)">2</text>
        <text class="btx b18" transform="translate(1295 780) rotate(168)">3</text>
        <text class="btx b15" transform="translate(1394 675) rotate(170)">4</text>
        <text class="btx b12" transform="translate(1472 589) rotate(170)">5</text>
        <text class="btx b12" transform="translate(720 797) rotate(168)">D</text>
        <text class="btx b15" transform="translate(725 823) rotate(165)">D</text>
        <text class="btx b15" transform="translate(733 860) rotate(160)">A</text>
      </svg>
      <div class="ptitle">Perspektif - Deneme Sürümü</div>
      <div class="vbtns">
        <span class="vb"><svg viewBox="0 0 14 12" class="ico10"><path d="M1 1h12M1 1l6 10 6-10" fill="none" stroke="#222"/></svg></span>
        <span class="vb nb">N</span>
        <span class="vb"><svg viewBox="0 0 10 10" class="ico10"><path d="M1 9 5 2l4 7" fill="none" stroke="#222"/></svg></span>
      </div>
    </div>
    <aside class="side">
      <div class="rapor"><span>Rapor Önizleme</span></div>
      <div class="vtb">
        <span class="dots"></span>
        <svg class="ti" viewBox="0 0 20 20"><use href="#t-grid"/></svg>
        <svg class="ti" viewBox="0 0 20 20"><use href="#t-node"/><use href="#o-pen"/></svg>
        <svg class="ti" viewBox="0 0 20 20"><use href="#t-hatch"/><use href="#o-pen"/></svg>
        <svg class="ti" viewBox="0 0 20 20"><use href="#t-colr"/><use href="#o-pen"/></svg>
        <svg class="ti" viewBox="0 0 20 20"><use href="#t-ubeam"/><use href="#o-pen"/></svg>
        <svg class="ti" viewBox="0 0 20 20"><use href="#t-stack"/><use href="#o-pen"/></svg>
        <svg class="ti" viewBox="0 0 20 20"><use href="#t-brick"/><use href="#o-pen"/></svg>
        <svg class="ti" viewBox="0 0 20 20"><use href="#t-winb"/></svg>
        <svg class="ti" viewBox="0 0 20 20"><use href="#t-found"/><use href="#o-pen"/></svg>
        <svg class="ti" viewBox="0 0 20 20"><use href="#t-rect"/><use href="#o-pen"/></svg>
        <svg class="ti" viewBox="0 0 20 20"><use href="#t-found2"/><use href="#o-pen"/></svg>
        <svg class="ti" viewBox="0 0 20 20"><use href="#t-plus"/></svg>
        <svg class="ti" viewBox="0 0 20 20"><use href="#t-tee"/><use href="#o-pen"/></svg>
        <svg class="ti" viewBox="0 0 20 20"><use href="#t-ell"/><use href="#o-pen"/></svg>
        <svg class="ti" viewBox="0 0 20 20"><use href="#t-diag"/><use href="#o-pen"/></svg>
        <svg class="ti" viewBox="0 0 20 20"><use href="#t-truss"/><use href="#o-pen"/></svg>
        <svg class="ti" viewBox="0 0 20 20"><use href="#t-dome"/><use href="#o-pen"/></svg>
        <svg class="ti" viewBox="0 0 20 20"><use href="#t-xgray"/></svg>
        <svg class="ti" viewBox="0 0 20 20"><use href="#t-bars"/></svg>
        <svg class="ti" viewBox="0 0 20 20"><use href="#t-lvl"/></svg>
        <svg class="ti" viewBox="0 0 20 20"><use href="#t-123"/></svg>
        <span class="vend"><svg class="ico10" viewBox="0 0 10 10"><path d="M1 1v8" stroke="#fff" stroke-width="2"/><path d="M4 1l5 4-5 4z" fill="#fff"/></svg></span>
      </div>
      <div class="vcol">
        <div class="vtb">
          <span class="dots"></span>
          <svg class="ti" viewBox="0 0 20 20"><use href="#t-check"/><use href="#o-cy"/></svg>
          <svg class="ti" viewBox="0 0 20 20"><use href="#t-calc"/><use href="#o-cy"/></svg>
          <svg class="ti" viewBox="0 0 20 20"><use href="#t-stack"/><use href="#o-cy"/></svg>
          <svg class="ti" viewBox="0 0 20 20"><use href="#t-brick"/><use href="#o-cy"/></svg>
          <span class="sep"></span>
          <svg class="ti" viewBox="0 0 20 20"><use href="#t-beamf"/></svg>
          <svg class="ti" viewBox="0 0 20 20"><use href="#t-cap"/><use href="#o-cy"/></svg>
          <svg class="ti" viewBox="0 0 20 20"><use href="#t-funnel"/></svg>
          <svg class="ti" viewBox="0 0 20 20"><use href="#t-slab"/><use href="#o-cy"/></svg>
          <svg class="ti" viewBox="0 0 20 20"><use href="#t-port"/><use href="#o-cy"/></svg>
          <span class="sep"></span>
          <svg class="ti" viewBox="0 0 20 20"><use href="#t-found"/><use href="#o-cy"/></svg>
          <svg class="ti" viewBox="0 0 20 20"><use href="#t-rect"/><use href="#o-cy"/></svg>
          <svg class="ti" viewBox="0 0 20 20"><use href="#t-found2"/><use href="#o-cy"/></svg>
          <svg class="ti" viewBox="0 0 20 20"><use href="#t-lsm"/><use href="#o-cy"/></svg>
          <span class="sep"></span>
          <svg class="ti" viewBox="0 0 20 20"><use href="#t-tee"/><use href="#o-cy"/></svg>
          <svg class="ti" viewBox="0 0 20 20"><use href="#t-ell"/><use href="#o-cy"/></svg>
          <svg class="ti" viewBox="0 0 20 20"><use href="#t-check"/><use href="#o-cy"/></svg>
          <svg class="ti" viewBox="0 0 20 20"><use href="#t-truss"/><use href="#o-cy"/></svg>
          <svg class="ti" viewBox="0 0 20 20"><use href="#t-dome"/><use href="#o-cy"/></svg>
          <span class="sep"></span>
          <svg class="ti" viewBox="0 0 20 20"><use href="#t-redline"/></svg>
          <svg class="ti" viewBox="0 0 20 20"><use href="#t-lens"/></svg>
          <span class="vend"><svg class="ico10" viewBox="0 0 10 10"><path d="M1 1v8" stroke="#fff" stroke-width="2"/><path d="M4 1l5 4-5 4z" fill="#fff"/></svg></span>
        </div>
        <div class="vtb vt2">
          <span class="dots"></span>
          <svg class="ti" viewBox="0 0 20 20"><use href="#t-m"/><use href="#o-ye"/></svg>
          <svg class="ti" viewBox="0 0 20 20"><use href="#t-beamy"/><use href="#o-ye"/></svg>
          <svg class="ti" viewBox="0 0 20 20"><use href="#t-mesh"/><use href="#o-ye"/></svg>
          <svg class="ti" viewBox="0 0 20 20"><use href="#t-oct"/><use href="#o-ye"/></svg>
          <svg class="ti" viewBox="0 0 20 20"><use href="#t-hook"/><use href="#o-ye"/></svg>
          <svg class="ti" viewBox="0 0 20 20"><use href="#t-lay"/><use href="#o-ye"/></svg>
          <svg class="ti" viewBox="0 0 20 20"><use href="#t-wedge"/><use href="#o-ye"/></svg>
          <svg class="ti" viewBox="0 0 20 20"><use href="#t-bar4"/><use href="#o-ye"/></svg>
          <svg class="ti" viewBox="0 0 20 20"><use href="#t-xbox"/><use href="#o-ye"/></svg>
          <svg class="ti" viewBox="0 0 20 20"><use href="#t-waves"/><use href="#o-ye"/></svg>
          <svg class="ti" viewBox="0 0 20 20"><use href="#t-star"/></svg>
          <svg class="ti" viewBox="0 0 20 20"><use href="#t-frame"/><use href="#o-ye"/></svg>
        </div>
      </div>
      <div class="vcol">
        <div class="vtb">
          <span class="dots"></span>
          <svg class="ti" viewBox="0 0 20 20"><use href="#t-rdoc"/><use href="#o-doc"/></svg>
          <span class="sep"></span>
          <svg class="ti" viewBox="0 0 20 20"><use href="#t-hatch"/><use href="#o-doc"/></svg>
          <svg class="ti" viewBox="0 0 20 20"><use href="#t-hatch"/><use href="#o-doc"/></svg>
          <svg class="ti" viewBox="0 0 20 20"><use href="#t-hatch"/><use href="#o-doc"/></svg>
          <svg class="ti" viewBox="0 0 20 20"><use href="#t-ell"/><use href="#o-doc"/></svg>
          <svg class="ti" viewBox="0 0 20 20"><use href="#t-beamf"/><use href="#o-doc"/></svg>
          <span class="sep"></span>
          <svg class="ti" viewBox="0 0 20 20"><use href="#t-beamf"/><use href="#o-doc"/></svg>
          <svg class="ti" viewBox="0 0 20 20"><use href="#t-stack"/><use href="#o-doc"/></svg>
          <svg class="ti" viewBox="0 0 20 20"><use href="#t-brick"/><use href="#o-doc"/></svg>
          <svg class="ti" viewBox="0 0 20 20"><use href="#t-cap"/><use href="#o-doc"/></svg>
          <svg class="ti" viewBox="0 0 20 20"><use href="#t-slab"/><use href="#o-doc"/></svg>
          <svg class="ti" viewBox="0 0 20 20"><use href="#t-dome"/><use href="#o-doc"/></svg>
          <svg class="ti" viewBox="0 0 20 20"><use href="#t-found"/><use href="#o-doc"/></svg>
          <svg class="ti" viewBox="0 0 20 20"><use href="#t-found"/><use href="#o-doc"/></svg>
          <svg class="ti" viewBox="0 0 20 20"><use href="#t-found2"/><use href="#o-doc"/></svg>
          <svg class="ti" viewBox="0 0 20 20"><use href="#t-rect"/><use href="#o-doc"/></svg>
          <svg class="ti" viewBox="0 0 20 20"><use href="#t-rect"/><use href="#o-doc"/></svg>
          <svg class="ti" viewBox="0 0 20 20"><use href="#t-truss"/><use href="#o-doc"/></svg>
          <span class="sep"></span>
          <svg class="ti" viewBox="0 0 20 20"><use href="#t-wedge"/><use href="#o-doc"/></svg>
          <svg class="ti" viewBox="0 0 20 20"><use href="#t-dome"/><use href="#o-doc"/></svg>
          <svg class="ti" viewBox="0 0 20 20"><use href="#t-found"/><use href="#o-doc"/></svg>
          <svg class="ti" viewBox="0 0 20 20"><use href="#t-port"/><use href="#o-doc"/></svg>
          <span class="sep"></span>
          <svg class="ti" viewBox="0 0 20 20"><use href="#t-arr2"/><use href="#o-doc"/></svg>
          <svg class="ti" viewBox="0 0 20 20"><use href="#t-arr1"/><use href="#o-doc"/></svg>
          <svg class="ti" viewBox="0 0 20 20"><use href="#t-cap"/><use href="#o-doc"/></svg>
          <span class="sep"></span>
          <svg class="ti" viewBox="0 0 20 20"><use href="#t-axes"/><use href="#o-doc"/></svg>
          <span class="sep"></span>
          <svg class="ti" viewBox="0 0 20 20"><use href="#t-rdoc"/></svg>
          <svg class="ti" viewBox="0 0 20 20"><use href="#t-plus"/><use href="#o-doc"/></svg>
          <span class="vend"></span>
        </div>
        <div class="vtb vt3">
          <span class="dots"></span>
          <svg class="ti" viewBox="0 0 20 20"><use href="#t-rule"/><use href="#o-doc"/></svg>
          <svg class="ti" viewBox="0 0 20 20"><use href="#t-lines"/><use href="#o-doc"/></svg>
          <svg class="ti" viewBox="0 0 20 20"><use href="#t-ring"/><use href="#o-doc"/></svg>
          <svg class="ti" viewBox="0 0 20 20"><use href="#t-tee"/></svg>
        </div>
      </div>
    </aside>
  </main>
</div>

<section class="dlg">
  <div class="dtitle"><span>Kat Kopyala</span>
    <svg class="dx" viewBox="0 0 12 12"><path d="M1 1l10 10M11 1 1 11" stroke="#999"/></svg>
  </div>
  <div class="dbody">
    <div class="dmain">
      <div class="listbox">
        <div class="lhead"><span class="lc1">Kat</span><span class="lc2">Kopya</span></div>
        <div class="lrow"><span class="lc1">2. KAT</span><span class="lc2 cbx"><svg class="xb" viewBox="0 0 10 10"><path d="M1 1h8v8H1z" fill="#fff" stroke="#000" stroke-width="1.400"/><path d="M1 1l8 8M9 1 1 9" stroke="#000" stroke-width="1.300"/></svg></span></div>
        <div class="lrow"><span class="lc1">1. KAT</span><span class="lc2 cbx"><svg class="xb" viewBox="0 0 10 10"><path d="M1 1h8v8H1z" fill="#fff" stroke="#000" stroke-width="1.400"/><path d="M1 1l8 8M9 1 1 9" stroke="#000" stroke-width="1.300"/></svg></span></div>
      </div>
      <div class="dbtns">
        <button class="btn">Tamam</button>
        <button class="btn iptal">İptal</button>
        <button class="btn push">Üst Katları Seç</button>
        <button class="btn">Alt Katları Seç</button>
        <button class="btn">Hepsini Seç</button>
        <button class="btn">Hiçbirini Seçme</button>
      </div>
    </div>
    <div class="chks">
      <label class="chk"><span class="box"></span>Eski objeleri sil</label>
      <label class="chk"><span class="box"></span>Giydirme cephe objelerini kopyala</label>
      <label class="chk"><span class="box"></span>Yalnız aktif çalışma modu objelerini kopyala</label>
      <label class="chk"><span class="box on"><svg viewBox="0 0 12 12"><path d="M2 6l3 4 6-8" fill="none" stroke="#555" stroke-width="1.300"/></svg></span>Kontur çizgilerini kopyala</label>
      <label class="chk"><span class="box on"><svg viewBox="0 0 12 12"><path d="M2 6l3 4 6-8" fill="none" stroke="#555" stroke-width="1.300"/></svg></span>Sadece seçili objeleri kopyala</label>
    </div>
  </div>
</section>

<section class="msg">
  <div class="mtitle"><span>ideCAD Statik</span>
    <svg class="mx" viewBox="0 0 12 12"><path d="M1 1l10 10M11 1 1 11" stroke="#111"/></svg>
  </div>
  <div class="mbody">
    <svg class="info" viewBox="0 0 30 30"><circle cx="15" cy="15" r="15" fill="#0a73c9"/><path d="M15 7.500v1.500M15 12v11" stroke="#fff" stroke-width="1.500"/></svg>
    <span>Kopyalanacak obje bulunamadı.</span>
  </div>
  <div class="mfoot"><button class="mbtn">Tamam</button></div>
</section>

<script src="script.js"></script>
</body>
</html>
```

FILE: styles.css
```css
*{box-sizing:border-box}
html,body{margin:0;height:100%;overflow:hidden}
body{font-family:"Noto Sans","Open Sans",sans-serif;background:#d0d6e0;color:#222;width:1679px;height:876px;position:relative}
.defs{position:absolute;width:0;height:0}
.app{display:flex;flex-direction:column;height:876px}
.caret{display:inline-block;width:0;height:0;border:3px solid transparent;border-top:3px solid #666;border-bottom:0;vertical-align:middle}
.caret.low{margin-top:7px}
.ico10{width:10px;height:10px;display:block}
.ico12{width:12px;height:12px;flex:none}
.ico14{width:14px;height:14px;flex:none}
.ico16{width:17px;height:17px;flex:none}
.ico18{width:18px;height:18px;display:block}
.tico{width:20px;height:20px;flex:none}
.gap6{margin-left:6px}

/* menu bar */
.menubar{height:20px;display:flex;justify-content:space-between;background:#d0d6e0;overflow:hidden}
.menu{display:grid;grid-template-columns:66.6px 69px 63px 64.6px 74.4px 119px 189px 75px 60px;padding-left:31.400px;align-items:center;height:19px}
.mi{font-size:11px;color:#565e6c;white-space:nowrap;letter-spacing:-.1px}
.topright{width:583px;display:flex;align-items:flex-start;height:20px}
.search{width:196px;height:18px;background:#fff;display:flex;align-items:center;gap:0;padding-left:2px;font-size:10.500px;font-style:italic;color:#9a9a9a;flex:none}
.drop{display:flex;align-items:center;justify-content:center;height:18px}
.wdrop{width:16px;flex:none}
.vsep{width:1px;height:14px;margin:3px 3px 0;background:#99a;flex:none}
.std{width:133px;height:19px;margin-left:1px;background:#e6e9ee;display:flex;align-items:center;gap:2px;padding:0 3px 0 2px;flex:none}
.stdlabel{font-size:11px;color:#111;margin-left:4px;flex:1}
.gor{font-size:11px;color:#5e6672;margin:1px 6px 0 5px;flex:none}
.topright>.caret{margin:8px 3px 0 3px;flex:none}
.topright>.gor+.caret{margin-right:8px}
.help{width:13px;height:16px;margin-top:1px;background:#3463b5;color:#fff;font-size:12px;text-align:center;line-height:16px;flex:none;font-weight:700}
.wbtn{width:14px;font-size:11px;color:#777;margin-left:2px;font-weight:700;flex:none}
.topright>.ico12{margin:3px 7px 0 0}

/* ribbon */
.ribbon{height:90px;display:flex;gap:4px;padding-top:2px;background:linear-gradient(#fdfbe9,#fff 30%,#eef0f4 85%,#cfd4de);overflow:hidden}
.grp{height:85px;border:1px solid #b3b8c0;border-radius:4px;display:flex;flex-direction:column;background:linear-gradient(#fffdf0,#fff 85%);flex:none;overflow:hidden}
.gbody{flex:1;display:grid;padding-top:4px;align-items:start}
.gcap{height:16px;flex:none;background:linear-gradient(#eceff4,#d9dde5);font-size:11px;color:#5a6270;text-align:center;line-height:18px;white-space:nowrap}
.rb{display:flex;flex-direction:column;align-items:center;min-width:0}
.rico{width:32px;height:32px;flex:none;margin-bottom:3px}
.rl{font-size:11px;line-height:13px;color:#555d6b;white-space:nowrap;letter-spacing:-.1px}
.rsep{width:1px;height:56px;background:#c8ccd2;margin-top:2px;justify-self:center}
.akst{font:7px "Liberation Sans",sans-serif;fill:#444}
.g-aks{width:62px;margin-left:-4px}
.g-aks .gbody{grid-template-columns:32px 30px;justify-content:start;overflow:visible}
.g-aks .gcap{padding-right:14px}
.g-aks .rl,.g-aks .caret{margin-right:10px}
.aksside{display:flex;flex-direction:column;gap:8px;padding:1px 0 0 2px}
.g-celik{width:350px}
.g-celik .gbody{grid-template-columns:42px 41px 44px 38px 47px 38px 48px 44px;padding-left:2px}
.g-makro{width:280px}
.g-makro .gbody{grid-template-columns:42px 44px 38px 50px 41px 62px;padding-left:2px}
.g-tasarim{width:107px}
.g-tasarim .gbody{grid-template-columns:55px 45px;padding-left:4px}
.g-rapor{width:368px}
.g-rapor .gbody{grid-template-columns:52px 205px 3px 63px 39px;padding-left:1px}
.g-cizim{width:108px}
.g-cizim .gbody{grid-template-columns:56px 46px;padding-left:4px}
.g-atg{width:239px}
.g-atg .gbody{grid-template-columns:44px 42px 3px 48px 1px 48px 43px;padding-left:1px}
.g-analiz{width:60px}
.g-analiz .gbody{grid-template-columns:1fr}
.rlist{display:flex;flex-direction:column;gap:4px;margin-top:-2px}
.rli{display:flex;align-items:center;gap:5px;height:18px;font-size:11px;color:#555d6b;white-space:nowrap;letter-spacing:-.1px}

/* horizontal toolbars */
.toolrow{height:29px;display:flex;align-items:flex-start;padding-top:1px;background:#d0d6e0;border-top:1px solid #f3f4f7;overflow:hidden}
.tb{display:flex;align-items:center;height:26px;background:linear-gradient(#dfe3ea,#d3d8e1);flex:none}
.tb1{margin-left:-1px}
.cell{width:22px;height:20px;flex:none;display:block}
.hl{background:linear-gradient(#fff1c9,#f9c57f);border:1px solid #c9a673;border-radius:2px;height:24px;display:flex;align-items:center;justify-content:center;margin-right:0}
.tsep{width:8px;height:18px;flex:none;background:linear-gradient(#99a,#99a) center/1px 100% no-repeat}
.tgap{width:7px;flex:none}
.grip{width:9px;height:26px;background:linear-gradient(#c4c9d2,#aeb3bc);border-radius:0 3px 3px 0;flex:none;display:flex;align-items:flex-end;justify-content:center;padding-bottom:2px;margin-right:9px}
.grip .caret{border-top-color:#fff}
.dotsv{width:5px;height:16px;margin-right:0;flex:none;background:radial-gradient(circle,#8a93a3 1px,transparent 1.200px) center top/5px 4px repeat-y}
.g2{margin-left:5px}

/* work area */
.work{flex:1;display:flex;min-height:0}
.leftview{width:702px;background:#000;position:relative;flex:none}
.canvas{display:block;width:100%;height:100%}
.wl{stroke:#6e6e6e;fill:none;stroke-width:1}
.wb{stroke:#bdbdbd;fill:none}
.yl{stroke:#eaea12;fill:none;stroke-width:1.200}
.cadtxt{font:9px "Liberation Sans",sans-serif;fill:#1616e0}
.updown{position:absolute;left:689px;top:1px;width:11px;height:14px;background:#d5d9df;border:1px solid #666;display:flex;align-items:center;justify-content:center}
.divider{width:5px;flex:none;background:linear-gradient(90deg,#aab,#fff 50%,#aab)}
.view3d{width:876px;background:#000;position:relative;flex:none;overflow:hidden}
.axis{stroke:#7c7c7c;fill:none;stroke-width:1}
.fl{stroke:url(#floorgrad);stroke-width:.9;fill:none}
.bub-s ellipse{fill:#000;stroke:#e00;stroke-width:1.300}
.bub-y{stroke:#ff0;stroke-width:1.800;fill:none}
.cols polygon{fill:#4c4cff}
.ucs{fill:#8f1a1a}
.bm{fill:#ff7700}
.bm-b{fill:#ff8c00}
.bm-d{fill:#c85a00}
.bm-e{fill:#ee6f00}
.nodes{fill:none;stroke:#e0603a;stroke-width:1}
.bub ellipse{fill:#000;stroke:#e00;stroke-width:1.500}
.btx{font-family:"Liberation Sans",sans-serif;font-weight:700;fill:#ff0}
.b20{font-size:22px}.b18{font-size:20px}.b15{font-size:15px}.b12{font-size:11px}
.ptitle{position:absolute;left:4px;top:4px;color:#f00;font:12px "Liberation Sans",sans-serif;letter-spacing:.15px}
.vbtns{position:absolute;right:0;top:1px;display:flex;gap:1px}
.vb{width:16px;height:14px;background:#d5d9df;border:1px solid #666;display:flex;align-items:center;justify-content:center}
.nb{font-size:11px;color:#222;line-height:12px}

/* right side */
.side{flex:1;display:flex;gap:2px;background:#d0d6e0;padding-left:4px;overflow:hidden;min-width:0}
.rapor{width:21px;height:115px;margin-top:3px;background:linear-gradient(90deg,#ffeeb8,#fdd27c);border:1px solid #e6d9b8;flex:none;display:flex;justify-content:center;padding-top:3px}
.rapor span{writing-mode:vertical-rl;font-size:11.800px;color:#6c6a62;white-space:nowrap}
.vtb{width:24px;flex:none;display:flex;flex-direction:column;align-items:center;background:linear-gradient(90deg,#edf0f5,#d8dce5);border-radius:3px 3px 0 0;align-self:flex-start}
.dots{height:8px;width:14px;margin-top:1px;flex:none;background:radial-gradient(circle,#9aa2b0 1px,transparent 1.200px) left center/4px 4px repeat-x}
.ti{width:20px;height:21px;flex:none;display:block;padding:.5px 0}
.sep{height:8px;width:15px;flex:none;background:linear-gradient(#a9aeb7,#a9aeb7) center/100% 1px no-repeat}
.vend{width:24px;height:12px;flex:none;background:#b4b9c2;display:flex;justify-content:flex-end;align-items:center;padding-right:3px;border-radius:0 0 3px 3px}
.vcol{display:flex;flex-direction:column;gap:2px;flex:none;align-items:flex-start}
.vt2{min-height:264px}
.vt3{min-height:80px}

/* main dialog */
.dlg{position:absolute;left:53px;top:119px;width:587px;height:717px;background:#eee;box-shadow:0 0 0 1px #4a4a4a;display:flex;flex-direction:column}
.dtitle{height:31px;background:#fff;display:flex;justify-content:space-between;align-items:center;padding:0 9px;flex:none;font-size:11.500px;color:#999}
.dx{width:11px;height:11px}
.dbody{flex:1;padding:11px 13px 0 11px;display:flex;flex-direction:column;min-height:0}
.dmain{display:flex;gap:7px;height:601px;flex:none}
.listbox{width:423px;height:601px;background:#fff;border:1px solid #888;padding:1px;flex:none}
.lhead{display:grid;grid-template-columns:314px 1fr;height:24px;align-items:center;font-size:11px;color:#222}
.lhead .lc2{border-left:1px solid #ddd;height:24px;line-height:24px;padding-left:5px}
.lhead .lc1{padding-left:5px}
.lrow{display:grid;grid-template-columns:311px 1fr;height:19px;align-items:center;border-bottom:1px solid #bbb;font-size:11px}
.lrow .lc1{padding-left:6px;color:#222}
.cbx{border-left:1px solid #bbb;height:18px;display:flex;align-items:center;justify-content:center;padding-right:3px}
.xb{width:11px;height:11px}
.dbtns{width:133px;display:flex;flex-direction:column;gap:5px;flex:none}
.btn{height:24px;background:#e1e1e1;border:1px solid #adadad;font:11px "Noto Sans","Open Sans",sans-serif;color:#222;padding:0;white-space:nowrap;flex:none;letter-spacing:-.25px}
.iptal{margin-top:1px}
.push{margin-top:208px}
.chks{display:grid;grid-template-columns:249px 1fr;row-gap:0;margin-top:3px}
.chk{display:flex;align-items:center;height:21px;font-size:10.700px;color:#222;gap:3px;white-space:nowrap;letter-spacing:-.42px}
.box{width:13px;height:13px;background:#fff;border:1px solid #333;flex:none;display:block}
.box svg{display:block;width:11px;height:11px}

/* message box */
.msg{position:absolute;left:597px;top:415px;width:259px;height:152px;background:#fff;border:1px solid #555;box-shadow:0 2px 8px rgba(0,0,0,.35);display:flex;flex-direction:column}
.mtitle{height:30px;display:flex;justify-content:space-between;align-items:center;padding:0 9px;flex:none;font-size:11.500px;color:#111}
.mx{width:11px;height:11px}
.mbody{flex:1;display:flex;align-items:center;gap:9px;padding:0 0 0 22px;font-size:11px;color:#0a0a30}
.info{width:30px;height:30px;flex:none}
.mfoot{height:42px;background:#f0f0f0;display:flex;justify-content:flex-end;align-items:flex-start;padding:11px 17px 0 0;flex:none}
.mbtn{width:81px;height:21px;background:#e1e1e1;border:2px solid #0078d7;font:11px "Noto Sans","Open Sans",sans-serif;color:#222;padding:0}
.num{font:8px "Liberation Sans",sans-serif;fill:#00008b}
.mm{font:11px "Liberation Sans",sans-serif;fill:#111}
.mm2{font:7px "Liberation Sans",sans-serif;fill:#111}
.qm{font:8px "Liberation Sans",sans-serif;fill:#111}
.axt{font:bold 8px "Liberation Sans",sans-serif;fill:#8b0000}
.axt2{font:bold 8px "Liberation Sans",sans-serif;fill:#111}
```

FILE: script.js
```js
// Perspective floor grid of the 3D view: two pencils of lines, one per vanishing point.
(function () {
  var NS = 'http://www.w3.org/2000/svg';
  var floor = document.getElementById('floor');
  var horizon = 142, bottom = 876;
  function addPencil(vx, x0, step, from, to) {
    for (var k = from; k <= to; k++) {
      var l = document.createElementNS(NS, 'line');
      l.setAttribute('x1', vx);
      l.setAttribute('y1', horizon);
      l.setAttribute('x2', x0 + k * step);
      l.setAttribute('y2', bottom);
      l.setAttribute('class', 'fl');
      floor.appendChild(l);
    }
  }
  addPencil(503, 765, 190, -3, 82);
  addPencil(1950, 1017, 205, -75, 4);
})();
```
